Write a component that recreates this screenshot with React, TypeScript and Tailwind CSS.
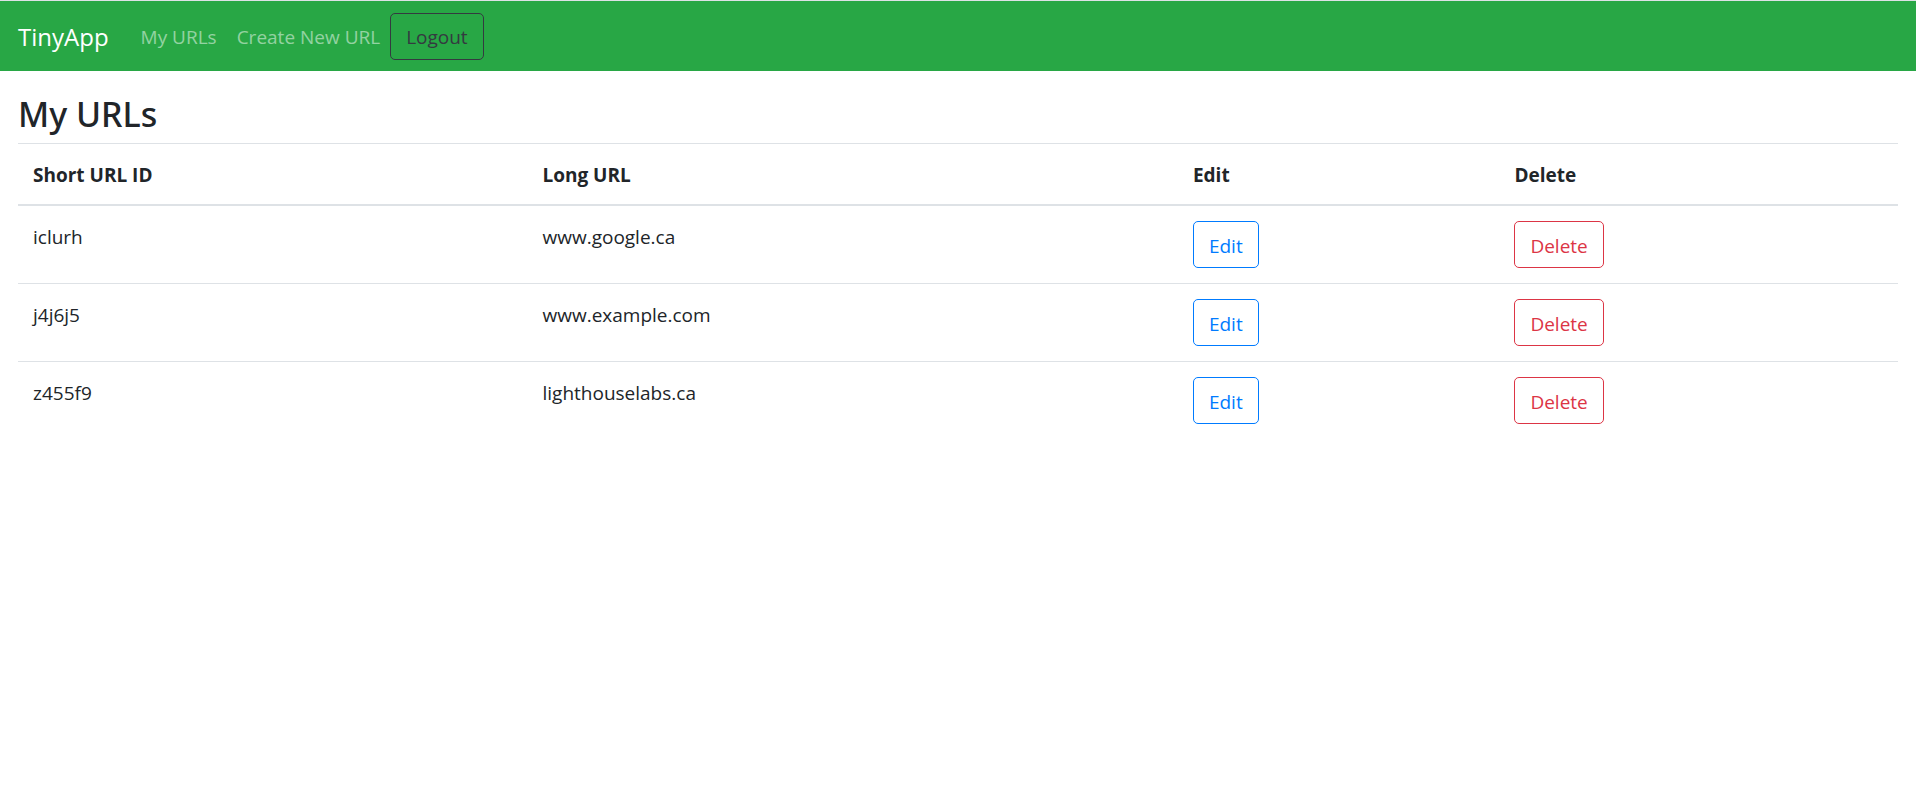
import React from "react";

type UrlEntry = { id: string; longUrl: string };

const urls: UrlEntry[] = [
  { id: "iclurh", longUrl: "www.google.ca" },
  { id: "j4j6j5", longUrl: "www.example.com" },
  { id: "z455f9", longUrl: "lighthouselabs.ca" },
];

const buttonBase =
  "inline-flex h-[47px] items-center justify-center rounded-[5px] border px-[15px] pt-[2px] align-top";

function NavBar() {
  return (
    <nav className="flex h-[71px] items-center border-t border-[#dee2e6] bg-[#28a745] px-[18px]">
      <a href="#" className="mr-[22px] pt-[2px] text-[24px] leading-9 text-white">
        TinyApp
      </a>
      <a href="#urls" className="px-[10px] pt-[2px] text-white/50">
        My URLs
      </a>
      <a href="#new" className="px-[10px] pt-[2px] text-white/50">
        Create New URL
      </a>
      <button type="button" className={`${buttonBase} border-[#343a40] text-[#343a40]`}>
        Logout
      </button>
    </nav>
  );
}

function UrlTable() {
  return (
    <table className="w-full table-fixed border-collapse text-left">
      <colgroup>
        <col className="w-[27.1%]" />
        <col className="w-[34.6%]" />
        <col className="w-[17.1%]" />
        <col />
      </colgroup>
      <thead>
        <tr className="border-t border-b-2 border-[#dee2e6]">
          <th className="px-[15px] pt-4 pb-[14px] font-bold">Short URL ID</th>
          <th className="px-[15px] pt-4 pb-[14px] font-bold">Long URL</th>
          <th className="px-[15px] pt-4 pb-[14px] font-bold">Edit</th>
          <th className="px-[15px] pt-4 pb-[14px] font-bold">Delete</th>
        </tr>
      </thead>
      <tbody>
        {urls.map((url) => (
          <tr key={url.id} className="border-t border-[#dee2e6] align-top">
            <td className="px-[15px] pt-4 pb-[14px]">{url.id}</td>
            <td className="px-[15px] pt-4 pb-[14px]">{url.longUrl}</td>
            <td className="p-[15px]">
              <button type="button" className={`${buttonBase} border-[#007bff] text-[#007bff]`}>
                Edit
              </button>
            </td>
            <td className="p-[15px]">
              <button type="button" className={`${buttonBase} border-[#dc3545] text-[#dc3545]`}>
                Delete
              </button>
            </td>
          </tr>
        ))}
      </tbody>
    </table>
  );
}

export default function App() {
  return (
    <div className="min-h-screen bg-white font-['Open_Sans','Noto_Sans',sans-serif] text-[19px] leading-[30px] text-[#212529]">
      <NavBar />
      <main className="px-[18px] pt-[22px]">
        <h3 className="mb-2 font-['Noto_Sans',sans-serif] text-[34px] leading-[42px] font-medium">
          My URLs
        </h3>
        <UrlTable />
      </main>
    </div>
  );
}
